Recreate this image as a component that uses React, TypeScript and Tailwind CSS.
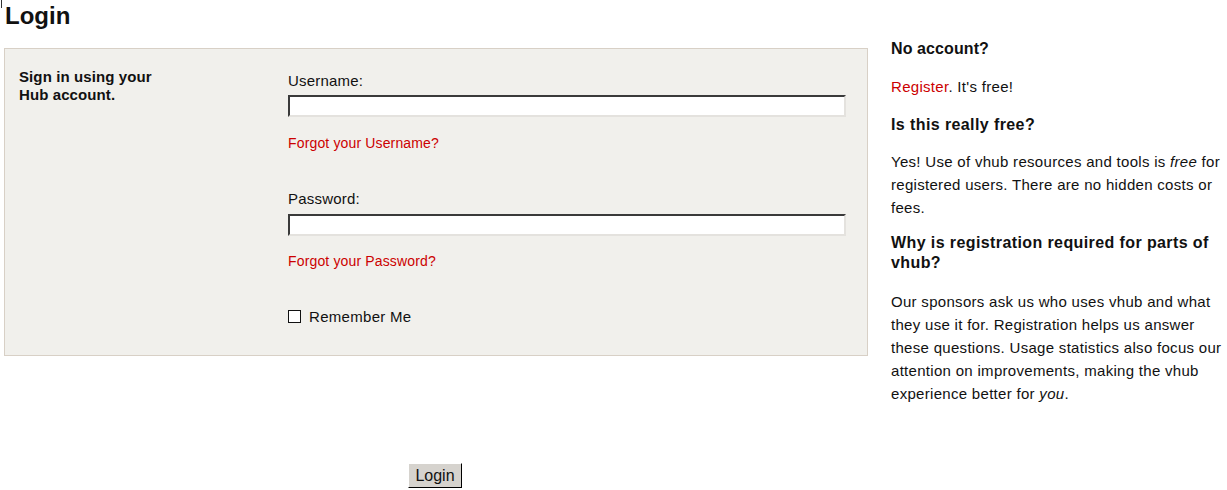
import { useState } from "react";

const font = { fontFamily: '"Liberation Sans", Arial, sans-serif' };

function TextInput({ type }: { type: string }) {
  return (
    <input
      type={type}
      className="block h-[22px] w-[558px] border-2 border-t-[#3a3a3a] border-l-[#3a3a3a] border-b-[#e4e2de] border-r-[#e4e2de] bg-white outline-none"
    />
  );
}

export default function App() {
  const [remember, setRemember] = useState(false);

  return (
    <div className="relative min-h-screen bg-white text-[#111]" style={font}>
      {/* stray caret mark */}
      <div className="absolute left-[1px] top-0 h-[8px] w-px bg-[#333]" />

      <h1 className="pl-[5px] pt-[1px] text-[24px] font-bold leading-[30px]">Login</h1>

      <div className="flex">
        {/* Main column */}
        <div className="ml-[4px] w-[864px] shrink-0 pt-[17px]">
          <div className="flex border border-[#d8d0c6] bg-[#f1f0ec] pb-[28px]">
            <div className="w-[283px] shrink-0 pl-[14px] pt-[19px] text-[15px] font-bold leading-[18px] tracking-[0.1px]">
              Sign in using your
              <br />
              Hub account.
            </div>

            <div className="pt-[22px]">
              <label className="mb-[4px] block text-[15px] leading-[20px] tracking-[0.2px]">Username:</label>
              <TextInput type="text" />
              <a href="#" className="mt-[17px] block text-[14px] leading-[18px] tracking-[0.15px] text-[#c00]">
                Forgot your Username?
              </a>

              <label className="mb-[5px] mt-[37px] block text-[15px] leading-[20px] tracking-[0.2px]">Password:</label>
              <TextInput type="password" />
              <a href="#" className="mt-[16px] block text-[14px] leading-[18px] tracking-[0.15px] text-[#c00]">
                Forgot your Password?
              </a>

              <label className="mt-[37px] flex items-center gap-[8px] text-[15px] leading-[20px] tracking-[0.3px]">
                <span
                  onClick={() => setRemember(!remember)}
                  className="mt-[-2px] flex h-[13px] w-[13px] items-center justify-center border border-[#111] bg-white text-[10px]"
                >
                  {remember ? "✓" : ""}
                </span>
                Remember Me
              </label>
            </div>
          </div>

          <div className="flex justify-center pt-[107px]">
            <button className="ml-[-2px] h-[25px] w-[54px] border border-t-white border-l-white border-b-black border-r-black bg-[#d6d3ce] text-[16px] leading-[20px] text-[#111]">
              Login
            </button>
          </div>
        </div>

        {/* Sidebar */}
        <div className="ml-[23px] w-[336px] pt-[7px] text-[15px] leading-[23px] tracking-[0.3px]">
          <h3 className="text-[16px] font-bold leading-[22px] tracking-[0.1px]">No account?</h3>
          <p className="mt-[15px]">
            <a href="#" className="text-[#c00]">Register</a>. It's free!
          </p>
          <h3 className="mt-[16px] text-[16px] font-bold leading-[22px] tracking-[0.4px]">Is this really free?</h3>
          <p className="mt-[14px]">
            Yes! Use of vhub resources and tools is <em>free</em> for registered users. There are no hidden costs or fees.
          </p>
          <h3 className="mt-[14px] text-[16px] font-bold leading-[20px] tracking-[0.4px]">
            Why is registration required for parts of vhub?
          </h3>
          <p className="mt-[17px]">
            Our sponsors ask us who uses vhub and what they use it for. Registration helps us answer these questions. Usage statistics also focus our attention on improvements, making the vhub experience better for <em>you</em>.
          </p>
        </div>
      </div>
    </div>
  );
}
